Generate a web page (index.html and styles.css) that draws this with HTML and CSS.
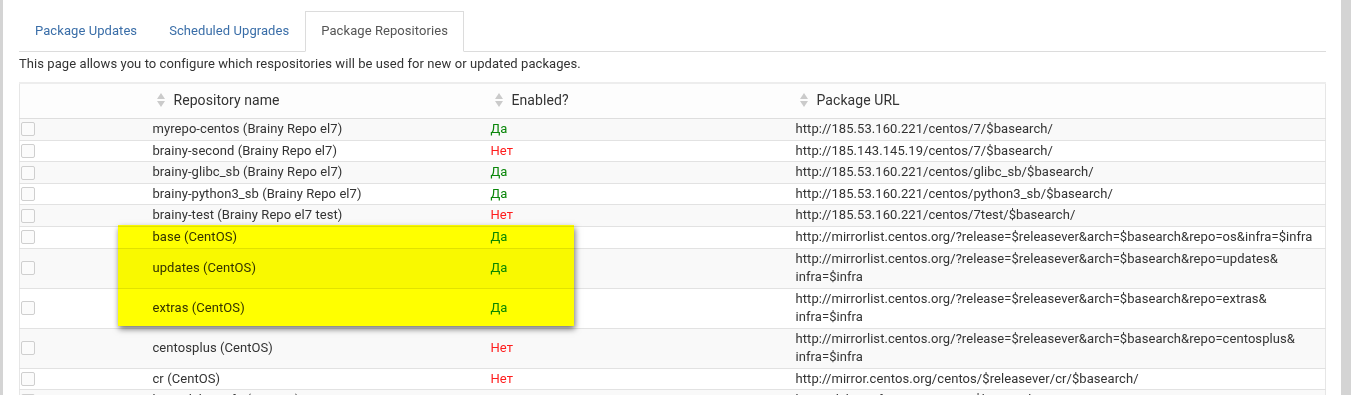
FILE: index.html
```html
<!DOCTYPE html>
<html lang="ru">
<head>
  <meta charset="UTF-8">
  <meta name="viewport" content="width=device-width, initial-scale=1.0">
  <title>Package Repositories</title>
  <link rel="stylesheet" href="styles.css">
</head>
<body>
  <div class="page">
    <div class="edge edge-left"></div>

    <div class="main">
      <ul class="nav-tabs">
        <li><a href="#">Package Updates</a></li>
        <li><a href="#">Scheduled Upgrades</a></li>
        <li class="active"><a href="#">Package Repositories</a></li>
      </ul>

      <p class="intro">This page allows you to configure which respositories will be used for new or updated packages.</p>

      <div class="table-wrap">
        <table class="repos">
          <colgroup>
            <col class="col-check">
            <col class="col-name">
            <col class="col-enabled">
            <col>
          </colgroup>
          <thead>
            <tr>
              <th></th>
              <th><span class="sortable"><svg class="sort-icon" width="8" height="14" viewBox="0 0 8 14"><polygon points="4,0 8,6 0,6"/><polygon points="0,8 8,8 4,14"/></svg>Repository name</span></th>
              <th><span class="sortable"><svg class="sort-icon" width="8" height="14" viewBox="0 0 8 14"><polygon points="4,0 8,6 0,6"/><polygon points="0,8 8,8 4,14"/></svg>Enabled?</span></th>
              <th><span class="sortable"><svg class="sort-icon" width="8" height="14" viewBox="0 0 8 14"><polygon points="4,0 8,6 0,6"/><polygon points="0,8 8,8 4,14"/></svg>Package URL</span></th>
            </tr>
          </thead>
          <tbody>
            <tr>
              <td><input type="checkbox" class="check"></td>
              <td>myrepo-centos (Brainy Repo el7)</td>
              <td class="yes">Да</td>
              <td>http://185.53.160.221/centos/7/$basearch/</td>
            </tr>
            <tr>
              <td><input type="checkbox" class="check"></td>
              <td>brainy-second (Brainy Repo el7)</td>
              <td class="no">Нет</td>
              <td>http://185.143.145.19/centos/7/$basearch/</td>
            </tr>
            <tr>
              <td><input type="checkbox" class="check"></td>
              <td>brainy-glibc_sb (Brainy Repo el7)</td>
              <td class="yes">Да</td>
              <td>http://185.53.160.221/centos/glibc_sb/$basearch/</td>
            </tr>
            <tr>
              <td><input type="checkbox" class="check"></td>
              <td>brainy-python3_sb (Brainy Repo el7)</td>
              <td class="yes">Да</td>
              <td>http://185.53.160.221/centos/python3_sb/$basearch/</td>
            </tr>
            <tr>
              <td><input type="checkbox" class="check"></td>
              <td>brainy-test (Brainy Repo el7 test)</td>
              <td class="no">Нет</td>
              <td>http://185.53.160.221/centos/7test/$basearch/</td>
            </tr>
            <tr>
              <td><input type="checkbox" class="check"></td>
              <td>base (CentOS)</td>
              <td class="yes">Да</td>
              <td>http://mirrorlist.centos.org/?release=$releasever&amp;arch=$basearch&amp;repo=os&amp;infra=$infra</td>
            </tr>
            <tr>
              <td><input type="checkbox" class="check"></td>
              <td>updates (CentOS)</td>
              <td class="yes">Да</td>
              <td>http://mirrorlist.centos.org/?release=$releasever&amp;arch=$basearch&amp;repo=updates&amp;<wbr>infra=$infra</td>
            </tr>
            <tr>
              <td><input type="checkbox" class="check"></td>
              <td>extras (CentOS)</td>
              <td class="yes">Да</td>
              <td>http://mirrorlist.centos.org/?release=$releasever&amp;arch=$basearch&amp;repo=extras&amp;<wbr>infra=$infra</td>
            </tr>
            <tr>
              <td><input type="checkbox" class="check"></td>
              <td>centosplus (CentOS)</td>
              <td class="no">Нет</td>
              <td>http://mirrorlist.centos.org/?release=$releasever&amp;arch=$basearch&amp;repo=centosplus&amp;<wbr>infra=$infra</td>
            </tr>
            <tr>
              <td><input type="checkbox" class="check"></td>
              <td>cr (CentOS)</td>
              <td class="no">Нет</td>
              <td>http://mirror.centos.org/centos/$releasever/cr/$basearch/</td>
            </tr>
            <tr>
              <td><input type="checkbox" class="check"></td>
              <td>base-debuginfo (CentOS)</td>
              <td class="no">Нет</td>
              <td>http://debuginfo.centos.org/7/$basearch/</td>
            </tr>
          </tbody>
        </table>

        <!-- marker over the three CentOS rows -->
        <div class="highlight"></div>
      </div>
    </div>

    <div class="edge edge-right"></div>
  </div>
</body>
</html>
```

FILE: styles.css
```css
html, body {
  height: 100%;
  overflow: hidden;
}
body {
  margin: 0;
  font-family: Roboto, "Liberation Sans", sans-serif;
  font-size: 13px;
  line-height: 1.42857;
  letter-spacing: 0.07px;
  color: #333;
  background: #fff;
}
.page {
  display: flex;
  height: 100%;
}
.edge {
  background: #d4d4d4;
  flex-shrink: 0;
}
.edge-left {
  width: 3px;
}
.edge-right {
  width: 10px;
}
.main {
  flex: 1;
  min-width: 0;
  padding: 11px 15px 0 16px;
}

/* tabs */
.nav-tabs {
  display: flex;
  list-style: none;
  margin: 0;
  padding: 0;
  border-bottom: 1px solid #dcdcdc;
}
.nav-tabs li {
  margin-bottom: -1px;
}
.nav-tabs a {
  display: block;
  padding: 10px 15px;
  border: 1px solid transparent;
  color: #3a6ea8;
  text-decoration: none;
}
.nav-tabs .active a {
  color: #555;
  background: #fff;
  border-color: #dcdcdc;
  border-bottom-color: #fff;
}

.intro {
  margin: 3px 0 9px;
}

/* table */
.table-wrap {
  position: relative;
}
.repos {
  width: 100%;
  table-layout: fixed;
  border-collapse: collapse;
  border-top: 2px solid #ededed;
  border-left: 1px solid #e6e6e6;
  border-right: 1px solid #e6e6e6;
}
.col-check {
  width: 125px;
}
.col-name {
  width: 338px;
}
.col-enabled {
  width: 305px;
}
.repos th {
  text-align: left;
  font-weight: normal;
  font-size: 14px;
  line-height: 20px;
  padding: 6px 8px 6px 12px;
  background: #fdfdfd;
  border-bottom: 1px solid #dedede;
}
.sortable {
  display: inline-flex;
  align-items: center;
  gap: 9px;
}
.sort-icon {
  fill: #cbcbcb;
}
.repos td {
  padding: 1px 8px;
  vertical-align: middle;
  border-bottom: 1px solid #e2e2e2;
}
.repos td:first-child {
  padding-left: 1px;
}
.repos tbody tr:nth-child(odd) td {
  background: #f9f9f9;
}
.check {
  appearance: none;
  -webkit-appearance: none;
  display: block;
  width: 14px;
  height: 14px;
  margin: 0;
  border: 1px solid #cfcfcf;
  border-radius: 2px;
  background: #fbfbfb;
}
.yes {
  color: #0a870a;
}
.no {
  color: #ff1d1d;
}

.highlight {
  position: absolute;
  left: 99px;
  top: 143px;
  width: 456px;
  height: 101px;
  background: #ffff00;
  mix-blend-mode: multiply;
  box-shadow: 1px 3px 6px rgba(0, 0, 0, 0.55);
}
```
